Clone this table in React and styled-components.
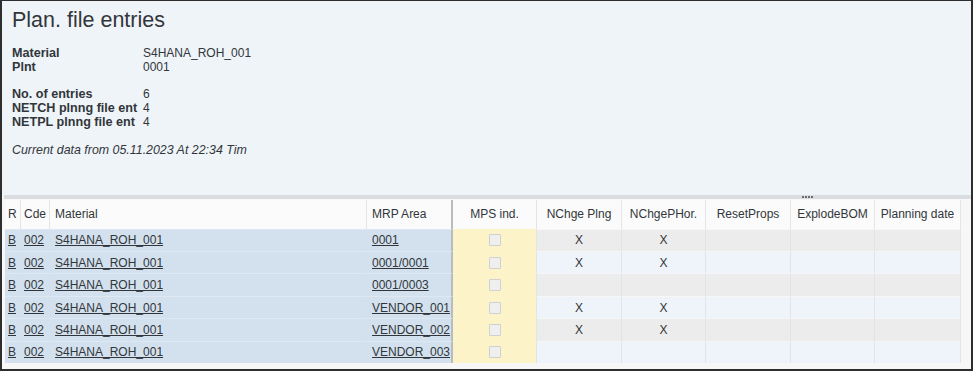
import React from "react";
import styled, { createGlobalStyle } from "styled-components";

const Global = createGlobalStyle`
  html, body { margin: 0; padding: 0; }
  body { font-family: "Liberation Sans", Arial, sans-serif; color: #32363a; }
  * { box-sizing: border-box; }
`;

const Frame = styled.div`
  width: 973px;
  height: 371px;
  border: 2px solid #2e2e2e;
  border-top-width: 1px;
  display: flex;
  flex-direction: column;
  background: #f5f6f7;
  overflow: hidden;
`;

const Header = styled.div`
  flex: 1;
  background: #eff4f9;
  padding: 7px 10px 0 10px;
  display: flex;
  flex-direction: column;
`;

const Title = styled.h1`
  margin: 0;
  font-size: 21.5px;
  line-height: 24px;
  font-weight: 400;
  color: #32363a;
`;

const InfoGroup = styled.div`
  display: grid;
  grid-template-columns: 131px auto;
  font-size: 12px;
  line-height: 14px;
  margin-top: ${(p) => p.$gap}px;
`;

const Label = styled.div`
  font-weight: 700;
  font-size: 12.6px;
  color: #32363a;
  white-space: nowrap;
`;

const Value = styled.div`
  color: #32363a;
`;

const Note = styled.div`
  margin-top: 14px;
  font-size: 12.4px;
  line-height: 14px;
  font-style: italic;
  color: #32363a;
`;

const Splitter = styled.div`
  height: 4px;
  margin-left: 2px;
  background: #d9dde1;
  display: flex;
  justify-content: center;
  align-items: flex-start;
  padding-left: 640px;
`;

const Dots = styled.div`
  display: flex;
  gap: 1px;
  margin-top: 1px;
  span {
    width: 2px;
    height: 2px;
    background: #6a6d70;
    display: block;
  }
`;

const TableArea = styled.div`
  padding: 1px 10px 6px 3px;
  background: #f7f7f7;
`;

const Grid = styled.div`
  display: grid;
  grid-template-columns: 16px 29px 317px 86px 84px 85px 84px 85px 84px 86px;
  grid-template-rows: 29px repeat(6, 22.4px);
  font-size: 12px;
`;

const HeadCell = styled.div`
  display: flex;
  align-items: center;
  justify-content: ${(p) => (p.$center ? "center" : "flex-start")};
  padding-left: ${(p) => (p.$center ? 0 : p.$pad ?? 4)}px;
  background: #fbfbfb;
  color: #32363a;
  white-space: nowrap;
  overflow: hidden;
  border-right: ${(p) => (p.$split ? "2px solid #b8bcc0" : "1px solid #e5e5e5")};
`;

const bgFor = (kind, odd) => {
  if (kind === "key") return "#d3e1ee";
  if (kind === "mps") return "#fdf3c8";
  return odd ? "#ececec" : "#eff4fa";
};

const Cell = styled.div`
  display: flex;
  align-items: center;
  justify-content: ${(p) => (p.$center ? "center" : "flex-start")};
  padding-left: ${(p) => (p.$center ? 0 : p.$pad ?? 4)}px;
  background: ${(p) => bgFor(p.$kind, p.$odd)};
  border-right: ${(p) =>
    p.$split ? "2px solid #b8bcc0" : p.$kind === "key" ? "1px solid #d3e1ee" : "1px solid #e2e4e6"};
  border-top: 1px solid ${(p) => (p.$kind === "key" ? "#dde8f2" : p.$kind === "mps" ? "#fdf3c8" : "#f6f6f6")};
  white-space: nowrap;
  overflow: hidden;
  color: #32363a;
`;

const Link = styled.span`
  text-decoration: underline;
  color: #32363a;
`;

const Check = styled.span`
  width: 12px;
  height: 12px;
  border: 1px solid #cfd1d3;
  background: #efefef;
  border-radius: 1px;
  display: block;
`;

const rows = [
  { mrp: "0001", p: "X", h: "X" },
  { mrp: "0001/0001", p: "X", h: "X" },
  { mrp: "0001/0003", p: "", h: "" },
  { mrp: "VENDOR_001", p: "X", h: "X" },
  { mrp: "VENDOR_002", p: "X", h: "X" },
  { mrp: "VENDOR_003", p: "", h: "" },
];

const heads = [
  { t: "R", pad: 3 },
  { t: "Cde", pad: 3 },
  { t: "Material", pad: 5 },
  { t: "MRP Area", pad: 5, split: true },
  { t: "MPS ind.", center: true },
  { t: "NChge Plng", center: true },
  { t: "NChgePHor.", center: true },
  { t: "ResetProps", center: true },
  { t: "ExplodeBOM", center: true },
  { t: "Planning date", center: true },
];

export default function App() {
  return (
    <>
      <Global />
      <Frame>
        <Header>
          <Title>Plan. file entries</Title>
          <InfoGroup $gap={14}>
            <Label>Material</Label>
            <Value>S4HANA_ROH_001</Value>
            <Label>Plnt</Label>
            <Value>0001</Value>
          </InfoGroup>
          <InfoGroup $gap={13}>
            <Label>No. of entries</Label>
            <Value>6</Value>
            <Label>NETCH plnng file ent</Label>
            <Value>4</Value>
            <Label>NETPL plnng file ent</Label>
            <Value>4</Value>
          </InfoGroup>
          <Note>Current data from 05.11.2023 At 22:34 Tim</Note>
        </Header>
        <Splitter>
          <Dots>
            <span />
            <span />
            <span />
            <span />
          </Dots>
        </Splitter>
        <TableArea>
          <Grid>
            {heads.map((h, i) => (
              <HeadCell key={i} $center={h.center} $pad={h.pad} $split={h.split}>
                {h.t}
              </HeadCell>
            ))}
            {rows.map((r, i) => {
              const odd = i % 2 === 0;
              return (
                <React.Fragment key={i}>
                  <Cell $kind="key" $pad={3}>
                    <Link>B</Link>
                  </Cell>
                  <Cell $kind="key" $pad={3}>
                    <Link>002</Link>
                  </Cell>
                  <Cell $kind="key" $pad={5}>
                    <Link>S4HANA_ROH_001</Link>
                  </Cell>
                  <Cell $kind="key" $pad={5} $split>
                    <Link>{r.mrp}</Link>
                  </Cell>
                  <Cell $kind="mps" $center>
                    <Check />
                  </Cell>
                  <Cell $odd={odd} $center>{r.p}</Cell>
                  <Cell $odd={odd} $center>{r.h}</Cell>
                  <Cell $odd={odd} $center />
                  <Cell $odd={odd} $center />
                  <Cell $odd={odd} $center />
                </React.Fragment>
              );
            })}
          </Grid>
        </TableArea>
      </Frame>
    </>
  );
}
